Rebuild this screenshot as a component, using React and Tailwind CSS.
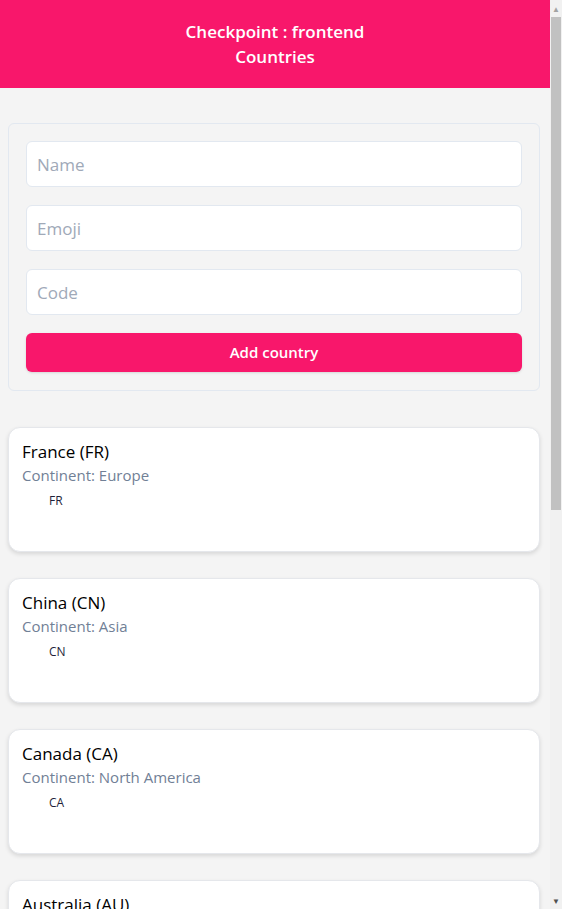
const countries = [
  { name: 'France', code: 'FR', continent: 'Europe' },
  { name: 'China', code: 'CN', continent: 'Asia' },
  { name: 'Canada', code: 'CA', continent: 'North America' },
  { name: 'Australia', code: 'AU', continent: 'Oceania' },
];

function Field({ placeholder }) {
  return (
    <input
      placeholder={placeholder}
      className="h-[46px] w-full rounded-md border border-[#e2e8f0] bg-white px-[10px] text-[17px] text-gray-800 outline-none placeholder:text-[#a0a9b8]"
    />
  );
}

function CountryCard({ country }) {
  return (
    <div className="h-[125px] rounded-xl border border-[#e5e7eb] bg-white px-[13px] pt-[12px] shadow-[0_2px_4px_rgba(0,0,0,0.12)]">
      <div className="text-[17px] leading-[24px] text-black">
        {country.name} ({country.code})
      </div>
      <div className="text-[15px] leading-[22px] text-[#718096]">
        Continent: {country.continent}
      </div>
      <div className="ml-[27px] mt-[5px] text-[12px] leading-[20px] text-[#1f1f3a]">
        {country.code}
      </div>
    </div>
  );
}

function Scrollbar() {
  return (
    <div className="flex h-[909px] w-[12px] shrink-0 flex-col items-center bg-[#f1f1f1]">
      <div className="flex h-[17px] items-center text-[8px] leading-none text-[#a3a3a3]">▲</div>
      <div className="h-[493px] w-[10px] bg-[#c1c1c1]" />
      <div className="flex-1" />
      <div className="flex h-[17px] items-center text-[8px] leading-none text-[#505050]">▼</div>
    </div>
  );
}

export default function App() {
  return (
    <div
      className="flex h-[909px] overflow-hidden bg-[#f4f4f4]"
      style={{ fontFamily: '"Open Sans", "Noto Sans", sans-serif' }}
    >
      <div className="w-[550px] shrink-0">
        <header className="flex h-[88px] flex-col items-center justify-center bg-[#f8176b] text-[17px] font-semibold leading-[25px] text-white">
          <div>Checkpoint : frontend</div>
          <div>Countries</div>
        </header>

        <main className="pl-[8px] pr-[10px] pt-[35px] pb-10">
          <form className="flex flex-col gap-[18px] rounded-md border border-[#e2e8f0] px-[17px] pt-[17px] pb-[18px]">
            <Field placeholder="Name" />
            <Field placeholder="Emoji" />
            <Field placeholder="Code" />
            <button
              type="button"
              className="h-[39px] rounded-md bg-[#f8176b] text-[15px] font-semibold text-white shadow-sm"
            >
              Add country
            </button>
          </form>

          <div className="mt-[36px] flex flex-col gap-[26px]">
            {countries.map((c) => (
              <CountryCard key={c.code} country={c} />
            ))}
          </div>
        </main>
      </div>
      <Scrollbar />
    </div>
  );
}
